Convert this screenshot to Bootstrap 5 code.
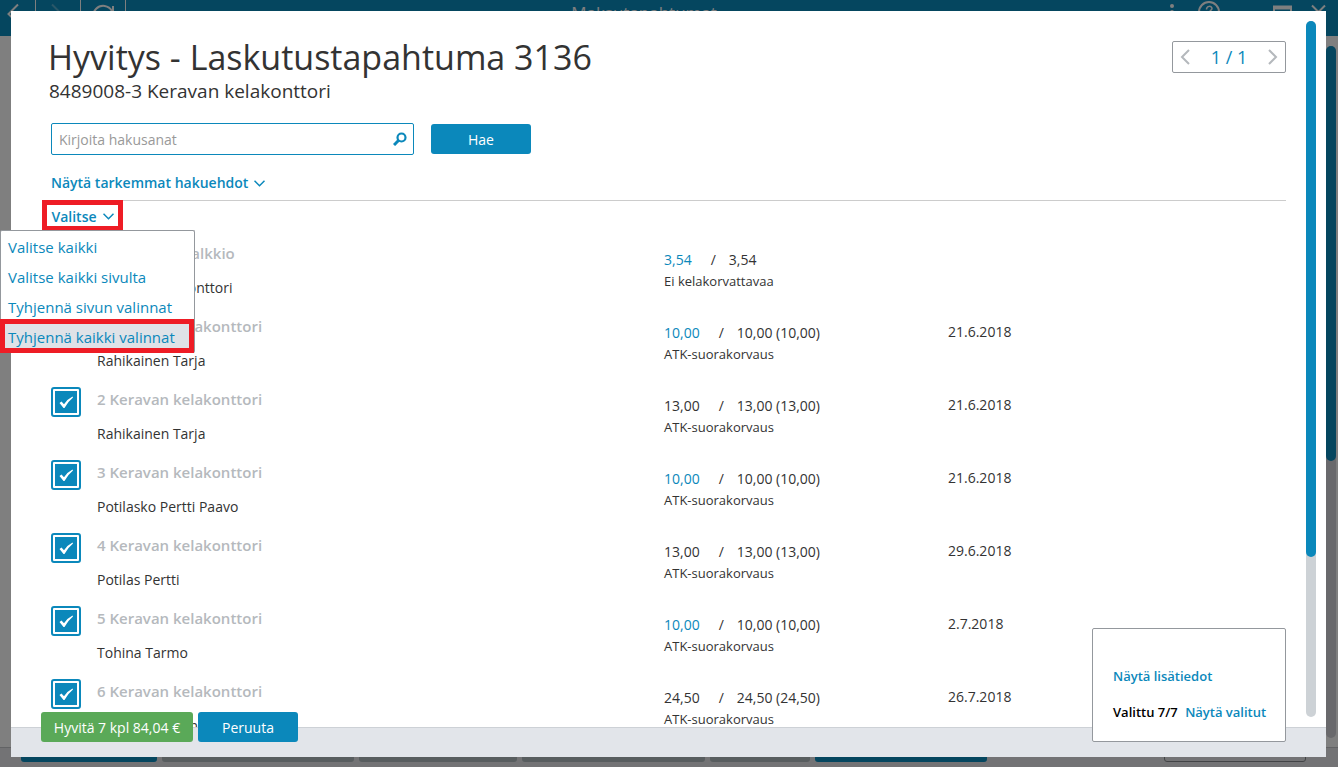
<!DOCTYPE html>
<html lang="fi">
<head>
<meta charset="utf-8">
<meta name="viewport" content="width=device-width, initial-scale=1">
<title>Hyvitys - Laskutustapahtuma 3136</title>
<link href="https://cdn.jsdelivr.net/npm/bootstrap@5.3.0/dist/css/bootstrap.min.css" rel="stylesheet">
<style>
  :root { --brand: #0b88bb; --line: #94989d; --bar: #e2e5ea; --mark: #ee1c25; }
  body { font-family: "Open Sans", "Noto Sans", sans-serif; font-size: 14px; line-height: 20px; color: #333; }
  a, .brand-text { color: var(--brand); text-decoration: none; }
  .semi { font-weight: 600; }

  .app-head { height: 36px; background: #0a8cbe; color: #fff; }
  .app-head .tool { width: 45px; height: 36px; padding: 0; border: 0; border-right: 1px solid #fff; background: none; color: #fff; }
  .app-head .tool:first-child { width: 36px; }
  .app-title { font-size: 17px; line-height: 26px; }
  .app-foot { height: 20px; background: #e6e7eb; border-top: 1px solid #c4c6ca; padding: 0 32px 5px 21px; }
  .app-foot button { border: 0; border-radius: 3px; background: #b0babe; height: 14px; padding: 0; }
  .app-foot .on { background: #0a8cbe; }
  .app-foot .outlined { background: none; border: 1px solid #85898c; }
  .track { width: 10px; border-radius: 5px; background: #cdd2d6; }
  .thumb { border-radius: 5px; background: var(--brand); height: 77%; }
  .app-main .track { margin: 10px 2px 9px 0; background: #d2d3d9; }
  .app-main .thumb { height: 60%; background: #0a8cbe; }
  .shade { background: rgba(0,0,0,.5); }

  .sheet { inset: 11px 12px 10px 11px; background: #fff; }
  .sheet-main { min-height: 0; }
  .sheet-body { padding: 30px 20px 0 40px; min-width: 0; min-height: 0; }
  .sheet-main > .track { margin: 10px 10px 10px 0; }
  h1 { font-size: 34px; line-height: 32px; font-weight: 400; margin: 0 0 0 -3px; }
  h2 { font-size: 19px; line-height: 24px; font-weight: 400; margin: 6px 0 0 -2px; }
  .pager { width: 114px; height: 32px; border: 1px solid var(--line); border-radius: 2px; font-size: 18px; }
  .pager button { border: 0; background: none; padding: 0 7px; line-height: 0; color: #b4b8bc; }
  .search { width: 363px; height: 32px; border: 1px solid var(--brand); border-radius: 2px; padding: 0 6px 0 7px; }
  .search input { border: 0; outline: 0; padding: 2px 0 0; color: #333; }
  .search input::placeholder { color: #999; opacity: 1; }
  .action { height: 30px; min-width: 100px; border: 0; border-radius: 3px; background: var(--brand); color: #fff; padding: 2px 10px 0; font-size: 14px; line-height: 28px; }
  .action.ok { background: #5aa958; min-width: 152px; }
  .text-toggle { border: 0; background: none; padding: 0; color: var(--brand); font-weight: 600; gap: 6px; }
  .filters { border-bottom: 1px solid #ccc; padding-bottom: 7px; margin-top: 18px; }

  .chooser { margin: -1px 0 0 -9px; z-index: 3; width: 81px; }
  .chooser .text-toggle { border: 5px solid var(--mark); width: 81px; height: 31px; padding-top: 2px; background: #fff; }
  .menu-box { left: -42px; top: 30px; width: 195px; margin: 0; padding: 1px 0 0; border: 1px solid var(--line); border-bottom: 0; border-radius: 2px; background: #fff; }
  .menu-box button { display: block; width: 100%; height: 30px; padding: 0 7px; border: 0; background: none; color: var(--brand); font-size: 15px; text-align: left; white-space: nowrap; }
  .menu-box .marked { height: 34px; margin: -3px 0 0 -1px; width: 194px; padding: 2px 3px 0; border: 5px solid var(--mark); background: #dfe2e7; }

  .rows { min-height: 0; flex: 1 1 0; }
  .rows table { width: 100%; table-layout: fixed; border-collapse: collapse; }
  .rows td { height: 73px; padding: 10px 0 0; vertical-align: top; white-space: nowrap; }
  .c-pick { width: 46px; } .c-date { width: 338px; } .c-sum { width: 284px; }
  .rows input { appearance: none; display: block; width: 30px; height: 30px; margin: 0; border: 2px solid var(--brand); border-radius: 3px;
    background: url("data:image/svg+xml,%3Csvg xmlns='http://www.w3.org/2000/svg' viewBox='0 0 22 22'%3E%3Cpath fill='%230b88bb' d='M0 0h22v22H0z'/%3E%3Cpath fill='%23fff' d='M4.500 12L6.500 10.500 9 13.200Q12.500 8 17.500 5.500L18 6.500Q13 10.500 9.500 17H8.500z'/%3E%3C/svg%3E") center/22px 22px no-repeat; }
  .rows .heading { color: #b5b9bd; font-size: 15px; font-weight: 600; line-height: 24px; margin-bottom: 13px; }
  .rows .sum { padding-top: 19px; }
  .rows .sep { margin: 0 13px 0 19px; }
  .rows .kind { font-size: 13px; line-height: 18px; margin-top: 2px; }
  .rows .day { padding-top: 18px; }

  .sheet-foot { height: 30px; background: var(--bar); border-top: 1px solid #cdd1d6; }
  .foot-actions { left: 30px; bottom: 15px; }
  .info-box { right: 40px; bottom: 15px; width: 194px; height: 114px; border: 1px solid var(--line); border-radius: 2px; background: #fff; padding: 37px 0 0 20px; font-size: 13px; color: #000; white-space: nowrap; }
</style>
<script src="https://cdn.jsdelivr.net/npm/bootstrap@5.3.0/dist/js/bootstrap.bundle.min.js"></script>
</head>
<body class="vh-100 overflow-hidden position-relative">
<div class="h-100 d-flex flex-column">
  <header class="app-head d-flex">
    <button class="tool" aria-label="Takaisin"><svg width="36" height="36" fill="none" stroke="currentColor" stroke-width="2"><path d="M18 4.500L8.500 14l9.500 9.500"/></svg></button>
    <button class="tool" aria-label="Eteenpäin"><svg width="44" height="36" fill="none" stroke="currentColor" stroke-width="2" opacity=".3"><path d="M16 4.500L25.500 14 16 23.500"/></svg></button>
    <button class="tool" aria-label="Päivitä"><svg width="44" height="36" fill="none" stroke="currentColor" stroke-width="2"><path d="M31 11A10 10 0 1 0 32 18M32 6v6h-6"/></svg></button>
    <div class="app-title flex-fill text-center">Maksutapahtumat</div>
    <svg width="176" height="36" fill="none" stroke="#fff" stroke-width="2"><g fill="#fff" stroke="none"><circle cx="10" cy="6" r="2"/><circle cx="10" cy="12" r="2"/><circle cx="10" cy="18" r="2"/></g><circle cx="47" cy="12" r="10"/><path d="M44.500 9.500c0-4 5.500-4 5.500-1 0 2-3 2-3 5M47 15v2" stroke-width="1.500"/><path d="M112 19V7h17v12z"/><path d="M111 7.500h19" stroke-width="4"/><path d="M150 5.500l13 13M163 5.500l-13 13"/></svg>
  </header>
  <main class="app-main flex-fill d-flex justify-content-end"><div class="track"><div class="thumb"></div></div></main>
  <footer class="app-foot d-flex">
    <div class="d-flex w-100" style="gap:5px">
      <button class="on" style="width:136px" aria-label="Toiminto 1"></button><button style="width:192px" aria-label="Toiminto 2"></button><button style="width:158px" aria-label="Toiminto 3"></button><button style="width:183px" aria-label="Toiminto 4"></button><button style="width:100px" aria-label="Toiminto 5"></button><button class="on" style="width:172px" aria-label="Toiminto 6"></button><button class="outlined ms-auto" style="width:142px" aria-label="Toiminto 7"></button>
    </div>
  </footer>
</div>
<div class="shade position-absolute top-0 start-0 w-100 h-100"></div>

<section class="sheet position-absolute d-flex flex-column" role="dialog" aria-labelledby="sheetTitle">
  <div class="sheet-main flex-fill d-flex">
    <div class="sheet-body flex-fill d-flex flex-column">
      <div class="d-flex justify-content-between align-items-start">
        <div><h1 id="sheetTitle">Hyvitys - Laskutustapahtuma 3136</h1><h2>8489008-3 Keravan kelakonttori</h2></div>
        <div class="pager d-flex align-items-center justify-content-between brand-text">
          <button aria-label="Edellinen"><svg width="11" height="16" fill="none" stroke="currentColor" stroke-width="2"><path d="M9 1L2 8l7 7"/></svg></button>
          <span>1 / 1</span>
          <button aria-label="Seuraava"><svg width="11" height="16" fill="none" stroke="currentColor" stroke-width="2"><path d="M2 1l7 7-7 7"/></svg></button>
        </div>
      </div>
      <form class="d-flex align-items-center mt-3 pt-1">
        <div class="search d-flex align-items-center">
          <input class="flex-fill" type="text" placeholder="Kirjoita hakusanat" aria-label="Kirjoita hakusanat">
          <svg width="14" height="14" fill="none" stroke="#0b88bb"><circle cx="8.500" cy="5.500" r="4" stroke-width="2.200"/><path d="M5.500 8.500L1 13" stroke-width="3"/></svg>
        </div>
        <button class="action" type="button" style="margin-left:17px">Hae</button>
      </form>
      <div class="filters"><button class="text-toggle d-flex align-items-center">Näytä tarkemmat hakuehdot <svg width="11" height="7" fill="none" stroke="currentColor" stroke-width="1.500"><path d="M.5.800l5 5 5-5"/></svg></button></div>
      <div class="chooser position-relative">
        <button class="text-toggle d-flex align-items-center justify-content-center" aria-expanded="true">Valitse <svg width="11" height="7" fill="none" stroke="currentColor" stroke-width="1.500"><path d="M.5.800l5 5 5-5"/></svg></button>
        <div class="menu-box position-absolute">
          <button>Valitse kaikki</button><button>Valitse kaikki sivulta</button><button>Tyhjennä sivun valinnat</button><button class="marked">Tyhjennä kaikki valinnat</button>
        </div>
      </div>
      <div class="rows overflow-hidden">
        <table>
          <colgroup><col class="c-pick"><col><col class="c-sum"><col class="c-date"></colgroup>
          <tbody>
            <tr><td><input type="checkbox" checked aria-label="Valitse rivi 0"></td><td><div class="heading">Kuntokotin Valkkio</div>Keravan kelakonttori</td><td class="sum"><a href="#">3,54</a><span class="sep">/</span>3,54<div class="kind">Ei kelakorvattavaa</div></td><td class="day"></td></tr>
            <tr><td><input type="checkbox" checked aria-label="Valitse rivi 1"></td><td><div class="heading">1 Keravan kelakonttori</div>Rahikainen Tarja</td><td class="sum"><a href="#">10,00</a><span class="sep">/</span>10,00 (10,00)<div class="kind">ATK-suorakorvaus</div></td><td class="day">21.6.2018</td></tr>
            <tr><td><input type="checkbox" checked aria-label="Valitse rivi 2"></td><td><div class="heading">2 Keravan kelakonttori</div>Rahikainen Tarja</td><td class="sum">13,00<span class="sep">/</span>13,00 (13,00)<div class="kind">ATK-suorakorvaus</div></td><td class="day">21.6.2018</td></tr>
            <tr><td><input type="checkbox" checked aria-label="Valitse rivi 3"></td><td><div class="heading">3 Keravan kelakonttori</div>Potilasko Pertti Paavo</td><td class="sum"><a href="#">10,00</a><span class="sep">/</span>10,00 (10,00)<div class="kind">ATK-suorakorvaus</div></td><td class="day">21.6.2018</td></tr>
            <tr><td><input type="checkbox" checked aria-label="Valitse rivi 4"></td><td><div class="heading">4 Keravan kelakonttori</div>Potilas Pertti</td><td class="sum">13,00<span class="sep">/</span>13,00 (13,00)<div class="kind">ATK-suorakorvaus</div></td><td class="day">29.6.2018</td></tr>
            <tr><td><input type="checkbox" checked aria-label="Valitse rivi 5"></td><td><div class="heading">5 Keravan kelakonttori</div>Tohina Tarmo</td><td class="sum"><a href="#">10,00</a><span class="sep">/</span>10,00 (10,00)<div class="kind">ATK-suorakorvaus</div></td><td class="day">2.7.2018</td></tr>
            <tr><td><input type="checkbox" checked aria-label="Valitse rivi 6"></td><td><div class="heading">6 Keravan kelakonttori</div>Tohinanen Jaan</td><td class="sum">24,50<span class="sep">/</span>24,50 (24,50)<div class="kind">ATK-suorakorvaus</div></td><td class="day">26.7.2018</td></tr>
          </tbody>
        </table>
      </div>
    </div>
    <div class="track flex-shrink-0"><div class="thumb"></div></div>
  </div>
  <div class="sheet-foot position-relative">
    <div class="foot-actions position-absolute d-flex" style="gap:5px"><button class="action ok text-nowrap">Hyvitä 7 kpl 84,04 €</button><button class="action">Peruuta</button></div>
    <div class="info-box position-absolute semi"><a href="#" class="d-block mb-3">Näytä lisätiedot</a>Valittu 7/7 <a href="#" class="ms-1">Näytä valitut</a></div>
  </div>
</section>
</body>
</html>
